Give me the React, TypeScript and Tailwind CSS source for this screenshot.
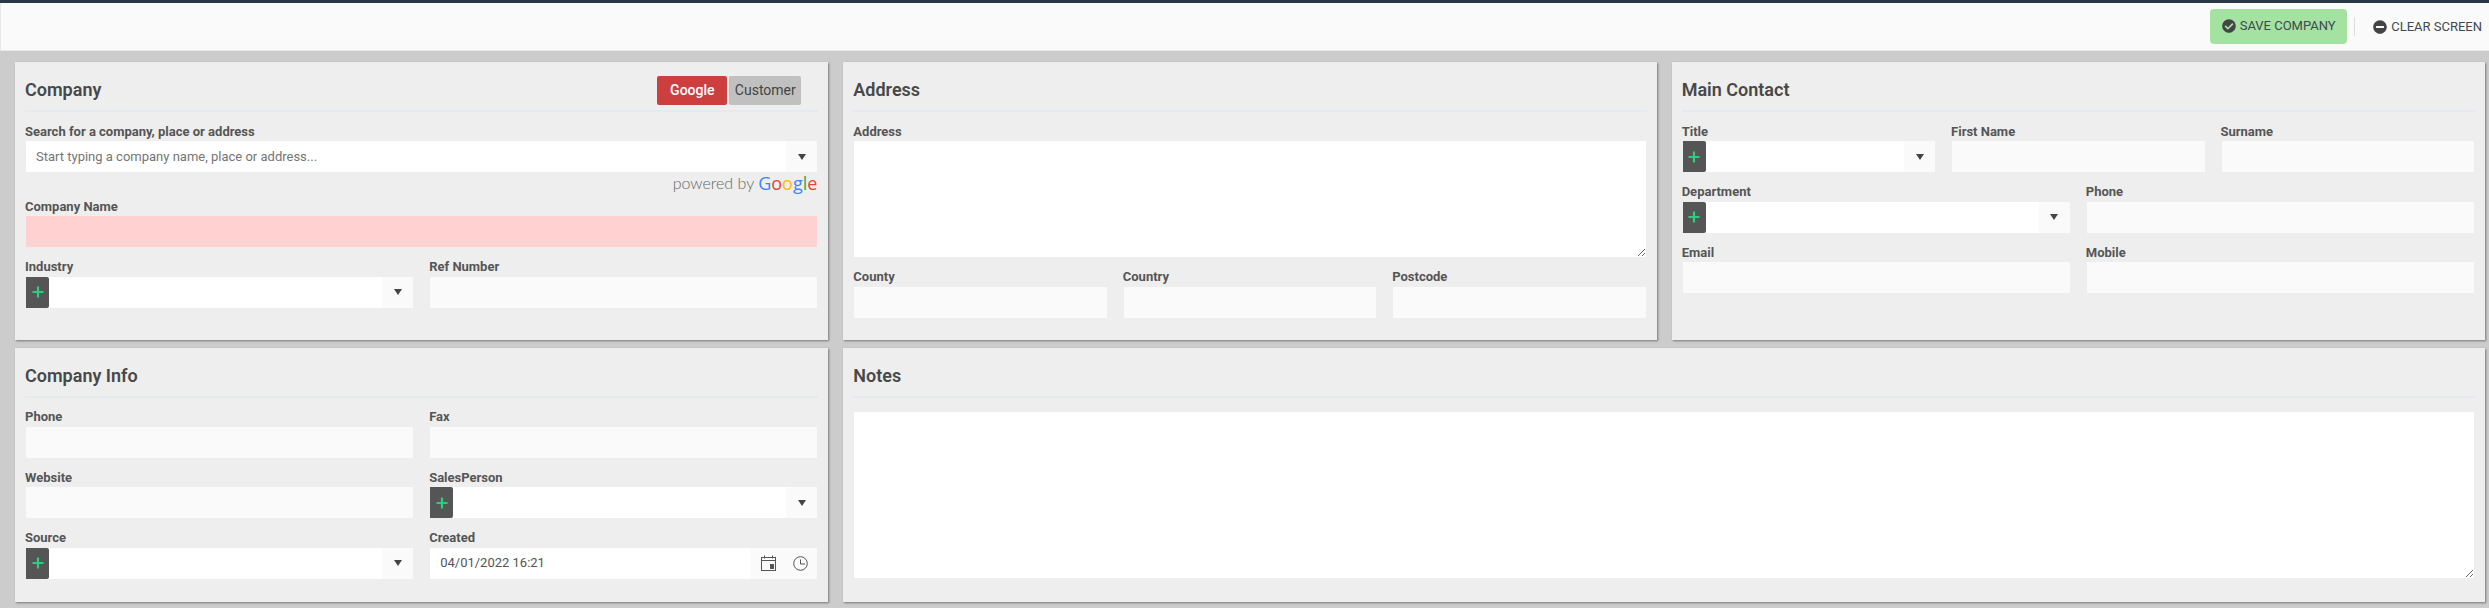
import React from "react";
import { FaCheckCircle, FaMinusCircle } from "react-icons/fa";

const Arrow = () => (
  <svg width="8" height="6" viewBox="0 0 8 6" className="block">
    <polygon points="0,0 8,0 4,6" fill="#444444" />
  </svg>
);

const Plus = () => (
  <svg width="12" height="12" viewBox="0 0 12 12" className="block">
    <path d="M6 0.5V11.5M0.5 6H11.5" stroke="#2ecc7d" strokeWidth="2.2" />
  </svg>
);

const Calendar = () => (
  <svg width="15" height="16" viewBox="0 0 15 16" fill="none" className="block">
    <rect x="0.5" y="2.5" width="14" height="13" stroke="#555555" />
    <line x1="0.5" y1="5.5" x2="14.5" y2="5.5" stroke="#555555" />
    <line x1="3.5" y1="0.5" x2="3.5" y2="3.5" stroke="#555555" />
    <line x1="11.5" y1="0.5" x2="11.5" y2="3.5" stroke="#555555" />
    <rect x="9" y="9" width="4" height="5" fill="#555555" />
  </svg>
);

const Clock = () => (
  <svg width="15" height="15" viewBox="0 0 15 15" fill="none" className="block">
    <circle cx="7.5" cy="7.5" r="6.8" stroke="#555555" />
    <path d="M7.5 3.5V8H12" stroke="#555555" />
  </svg>
);

const Label = ({ children }: { children?: React.ReactNode }) => (
  <div className="h-[17.5px] text-[13px] leading-[17px] font-bold text-[#555555] whitespace-nowrap">{children}</div>
);

const Field = ({ label, className = "" }: { label: string; className?: string }) => (
  <div className={"mb-[10px] min-w-0 " + className}>
    <Label>{label}</Label>
    <div className="h-[33px] bg-[#fafafa] border border-[#eeeeee]" />
  </div>
);

const SelectField = ({ label }: { label: string }) => (
  <div className="mb-[10px] min-w-0">
    <Label>{label}</Label>
    <div className="h-[33px] flex bg-white border border-[#eeeeee]">
      <div className="w-[23px] bg-[#555555] rounded-r-[2px] flex items-center justify-center">
        <Plus />
      </div>
      <div className="flex-1" />
      <div className="w-[31px] bg-[#fafafa] flex items-center justify-center">
        <Arrow />
      </div>
    </div>
  </div>
);

const Card = ({ title, right, className = "", children }: { title: string; right?: React.ReactNode; className?: string; children: React.ReactNode }) => (
  <section className={"bg-[#eeeeee] px-[10px] pt-[10px] shadow-[1px_1px_2px_#777777] min-w-0 " + className}>
    <div className="h-[38px] box-content border-b-2 border-[#e6e9ed] flex items-start justify-between mb-[10.5px]">
      <h2 className="text-[18px] leading-[36px] font-semibold text-[#484848]">{title}</h2>
      {right}
    </div>
    {children}
  </section>
);

const G = ({ c, children }: { c: string; children: React.ReactNode }) => <span style={{ color: c }}>{children}</span>;

export default function App() {
  return (
    <div className="w-[2489px] h-[608px] overflow-hidden bg-[#cccccc] font-['Roboto',sans-serif]">
      <div className="h-[3px] bg-[#2a3744]" />
      <header className="h-[48px] bg-[#fafafa] border-b border-l border-[#e8e8e8] flex items-center justify-end pr-[7px]">
        <button className="w-[137px] h-[35px] mt-[-1px] rounded-[4px] bg-[#a3e2a0] flex items-center justify-center gap-[4px] text-[13px] text-[#3d4a50]">
          <FaCheckCircle className="text-[14px] text-[#444444]" />
          SAVE COMPANY
        </button>
        <div className="w-px h-[19px] bg-[#dddddd] ml-[7px] mr-[18px]" />
        <button className="flex items-center gap-[4px] text-[13px] text-[#3d4a50]">
          <FaMinusCircle className="text-[14px] text-[#444444]" />
          CLEAR SCREEN
        </button>
      </header>

      <main className="pt-[11px] pl-[15px] pr-[4px] grid grid-cols-3 grid-rows-[278px_254.5px] gap-x-[15px] gap-y-[7.5px]">
        <Card
          title="Company"
          right={
            <div className="flex gap-[2px] mr-[17px] mt-[4px]">
              <span className="w-[70px] h-[29px] rounded-[2px] bg-[#cd3f3f] text-white text-[14px] font-medium flex items-center justify-center">Google</span>
              <span className="w-[72px] h-[29px] rounded-[2px] bg-[#c0c0c0] text-[#444444] text-[14px] flex items-center justify-center">Customer</span>
            </div>
          }
        >
          <div>
            <Label>Search for a company, place or address</Label>
            <div className="h-[33px] flex bg-white border border-[#eeeeee]">
              <div className="flex-1 flex items-center pl-[10px] text-[13px] text-[#757575]">Start typing a company name, place or address...</div>
              <div className="w-[31px] bg-[#fafafa] flex items-center justify-center">
                <Arrow />
              </div>
            </div>
          </div>
          <div className="h-[24.5px] pb-[4px] flex items-center justify-end pr-[1px] text-[16px] font-light font-['Lato',sans-serif] text-[#666666] whitespace-nowrap">
            powered by&nbsp;
            <span className="text-[18px] leading-[20px] font-normal font-['Open_Sans',sans-serif]">
              <G c="#4285f4">G</G>
              <G c="#ea4335">o</G>
              <G c="#fbbc05">o</G>
              <G c="#4285f4">g</G>
              <G c="#34a853">l</G>
              <G c="#ea4335">e</G>
            </span>
          </div>
          <div className="mb-[10px]">
            <Label>Company Name</Label>
            <div className="h-[33px] bg-[#ffd1d1] border border-[#eeeeee]" />
          </div>
          <div className="grid grid-cols-2 gap-x-[15px]">
            <SelectField label="Industry" />
            <Field label="Ref Number" />
          </div>
        </Card>

        <Card title="Address">
          <Label>Address</Label>
          <textarea className="block w-full h-[118px] mb-[10px] bg-white border border-[#eeeeee] outline-none" />
          <div className="grid grid-cols-3 gap-x-[15px]">
            <Field label="County" />
            <Field label="Country" />
            <Field label="Postcode" />
          </div>
        </Card>

        <Card title="Main Contact">
          <div className="grid grid-cols-3 gap-x-[15px]">
            <SelectField label="Title" />
            <Field label="First Name" />
            <Field label="Surname" />
          </div>
          <div className="grid grid-cols-2 gap-x-[15px]">
            <SelectField label="Department" />
            <Field label="Phone" />
            <Field label="Email" />
            <Field label="Mobile" />
          </div>
        </Card>

        <Card title="Company Info">
          <div className="grid grid-cols-2 gap-x-[15px]">
            <Field label="Phone" />
            <Field label="Fax" />
            <Field label="Website" />
            <SelectField label="SalesPerson" />
            <SelectField label="Source" />
            <div className="min-w-0">
              <Label>Created</Label>
              <div className="h-[33px] flex bg-white border border-[#eeeeee]">
                <div className="flex-1 flex items-center pl-[10px] text-[13px] text-[#555555]">04/01/2022 16:21</div>
                <div className="w-[66px] bg-[#fafafa] flex items-center justify-between pl-[10px] pr-[9px]">
                  <Calendar />
                  <Clock />
                </div>
              </div>
            </div>
          </div>
        </Card>

        <Card title="Notes" className="col-span-2">
          <div className="pt-[2.5px]">
            <textarea className="block w-full h-[168px] bg-white border border-[#eeeeee] outline-none" />
          </div>
        </Card>
      </main>
    </div>
  );
}
